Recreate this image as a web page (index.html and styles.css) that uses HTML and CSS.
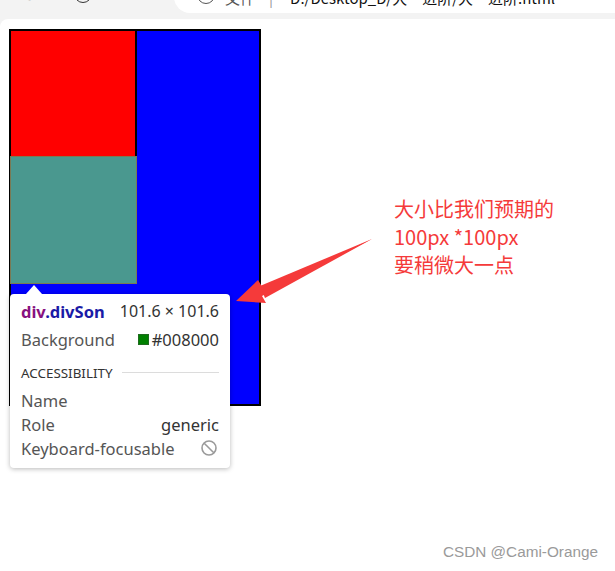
FILE: index.html
```html
<!DOCTYPE html>
<html lang="zh">
<head>
<meta charset="utf-8">
<link rel="stylesheet" href="styles.css">
</head>
<body>
<div class="chrome">
  <span class="nav back">&lt;</span>
  <span class="nav refresh"></span>
  <span class="nav tabs"><i></i><i></i></span>
  <div class="address">
    <span class="info"></span>
    <span class="file">文件</span>
    <span class="sep">|</span>
    <span class="url">D:/Desktop_D/大一进阶/大一进阶.html</span>
  </div>
</div>
<div class="page">
  <div class="outer">
    <div class="red"></div>
    <div class="son"></div>
  </div>

  <div class="tooltip">
    <div class="tip-arrow"></div>
    <div class="row head">
      <span class="sel"><span class="tag">div</span><span class="cls">.divSon</span></span>
      <span class="dim">101.6 × 101.6</span>
    </div>
    <div class="row">
      <span class="label">Background</span>
      <span class="val"><span class="swatch"></span>#008000</span>
    </div>
    <div class="section"><span>ACCESSIBILITY</span><span class="line"></span></div>
    <div class="row small"><span class="label">Name</span></div>
    <div class="row small"><span class="label">Role</span><span class="val">generic</span></div>
    <div class="row small"><span class="label">Keyboard-focusable</span>
      <svg class="no" width="18" height="18" viewBox="0 0 18 18"><circle cx="9" cy="9" r="7" fill="none" stroke="#9a9a9a" stroke-width="1.6"/><line x1="4.2" y1="4.2" x2="13.8" y2="13.8" stroke="#9a9a9a" stroke-width="1.6"/></svg>
    </div>
  </div>

  <svg class="arrow" width="160" height="80" viewBox="0 0 160 80">
    <polygon points="138,3 30,54 24,44 2,65 32,67 28,60" fill="#f53a3a"/>
    <polygon points="138,3 26,50 31,62" fill="#f53a3a"/>
  </svg>

  <div class="note">大小比我们预期的<br>100px *100px<br>要稍微大一点</div>

  <div class="mark">CSDN @Cami-Orange</div>
</div>
</body>
</html>
```

FILE: styles.css
```css
* { box-sizing: border-box; }
html, body { margin: 0; padding: 0; }
body {
  width: 615px;
  height: 571px;
  overflow: hidden;
  background: #f3f3f3;
  font-family: "Noto Sans", "Noto Sans CJK SC", sans-serif;
}
.chrome {
  position: relative;
  height: 19px;
  background: #f3f3f3;
  overflow: hidden;
}
.nav { position: absolute; color: #c8c8c8; }
.back { left: 22px; top: -14px; font-size: 16px; }
.refresh {
  left: 74px; top: -15px; width: 18px; height: 18px;
  border: 1.6px solid #333; border-radius: 50%;
}
.tabs { left: 111px; top: -7px; display: flex; gap: 3px; }
.tabs i { display: block; width: 5px; height: 7px; border: 1.4px solid #333; border-radius: 1px; }
.address {
  position: absolute;
  left: 174px; right: 0; top: -20px; height: 33px;
  background: #fff;
  border-radius: 16px 0 0 16px;
  display: flex; align-items: flex-end;
  padding-bottom: 8px;
  font-size: 15px;
  color: #555;
  font-family: "Noto Sans CJK SC", sans-serif;
  line-height: 14px;
}
.info {
  width: 18px; height: 18px; border: 1.4px solid #555; border-radius: 50%;
  margin-left: 23px; margin-bottom: 1px;
}
.file { margin-left: 10px; }
.sep { margin-left: 14px; color: #999; }
.url { margin-left: 17px; color: #111; }

.page {
  position: relative;
  height: 552px;
  background: #fff;
  border-top-left-radius: 8px;
  padding: 10px 0 0 9px;
}
.outer {
  width: 252px;
  height: 377px;
  border: 2px solid #000;
  background: #0000ff;
}
.red {
  width: 126px;
  height: 125px;
  background: #ff0000;
  border-right: 2px solid #000;
}
.son {
  width: 127px;
  height: 128px;
  margin-left: -1px;
  background: #4a988f;
  border: 1px solid #7a7a55;
}

.tooltip {
  position: absolute;
  left: 10px; top: 275px;
  width: 220px;
  padding: 2px 11px 8px 11px;
  background: #fff;
  border-radius: 4px;
  box-shadow: 0 1px 5px rgba(0,0,0,0.28);
  font-size: 16.5px;
  color: #555;
}
.tip-arrow {
  position: absolute;
  left: 16px; top: -9px;
  width: 0; height: 0;
  border-left: 8px solid transparent;
  border-right: 8px solid transparent;
  border-bottom: 9px solid #fff;
}
.row {
  display: flex;
  justify-content: space-between;
  align-items: center;
  height: 26px;
}
.row.small { height: 24px; }
.head { height: 30px; }
.sel { font-weight: bold; }
.tag { color: #881280; }
.cls { color: #1a1aa6; }
.dim { color: #333; font-size: 16px; }
.val { color: #333; display: flex; align-items: center; }
.swatch { width: 11px; height: 11px; background: #008000; margin-right: 3px; border: 1px solid #1f6b1f; }
.section {
  display: flex; align-items: center; gap: 10px;
  height: 36px;
  padding-top: 5px;
  font-size: 13.4px; color: #333;
}
.section .line { flex: 1; height: 1px; background: #dcdcdc; }
.no { margin-right: 1px; }

.arrow {
  position: absolute;
  left: 234px; top: 217px;
}
.note {
  position: absolute;
  left: 394px; top: 176px;
  font-size: 20px;
  line-height: 28px;
  color: #f53a3a;
  font-family: "Microsoft YaHei", "Noto Sans CJK SC", sans-serif;
}
.mark {
  position: absolute;
  left: 443px; top: 524px;
  font-size: 15.3px;
  color: #9a9a9a;
  font-family: "Liberation Sans", "Noto Sans", sans-serif;
}
```
